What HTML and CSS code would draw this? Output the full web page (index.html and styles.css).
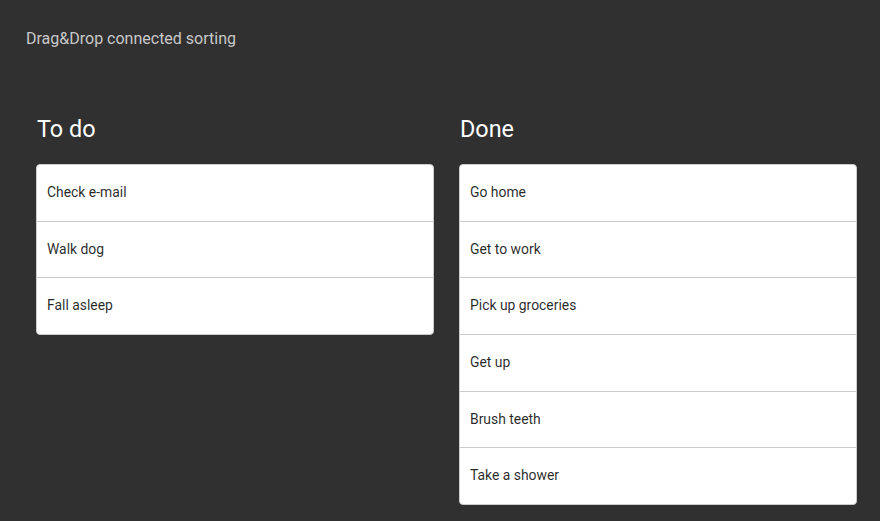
FILE: index.html
```html
<!DOCTYPE html>
<html>
<head>
<meta charset="utf-8">
<link rel="stylesheet" href="styles.css">
</head>
<body>
<div class="page">
  <div class="title">Drag&amp;Drop connected sorting</div>
  <div class="columns">
    <div class="column">
      <h2 class="heading">To do</h2>
      <div class="list">
        <div class="box">Check e-mail</div>
        <div class="box">Walk dog</div>
        <div class="box">Fall asleep</div>
      </div>
    </div>
    <div class="column">
      <h2 class="heading">Done</h2>
      <div class="list">
        <div class="box">Go home</div>
        <div class="box">Get to work</div>
        <div class="box">Pick up groceries</div>
        <div class="box">Get up</div>
        <div class="box">Brush teeth</div>
        <div class="box">Take a shower</div>
      </div>
    </div>
  </div>
</div>
</body>
</html>
```
FILE: styles.css
```css
html, body {
  margin: 0;
  padding: 0;
  background: #303030;
  height: 100%;
  overflow: hidden;
}
.page {
  font-family: Roboto, "Liberation Sans", sans-serif;
  padding: 30px 0 0 26px;
}
.title {
  color: #c8c8c8;
  font-size: 16px;
  line-height: 18px;
}
.columns {
  display: flex;
  gap: 25px;
  padding-left: 10px;
  margin-top: 68px;
}
.column {
  width: 398px;
}
.heading {
  margin: 0 0 21px 1px;
  color: #ffffff;
  font-size: 23.4px;
  font-weight: 400;
  line-height: 27px;
}
.list {
  background: #fff;
  border: 1px solid #ccc;
  border-radius: 4px;
  overflow: hidden;
}
.box {
  padding: 20px 10px;
  line-height: 15.67px;
  font-size: 13.9px;
  color: rgba(0,0,0,0.85);
  border-bottom: 1px solid #ccc;
}
.box:last-child {
  border-bottom: none;
}
```
